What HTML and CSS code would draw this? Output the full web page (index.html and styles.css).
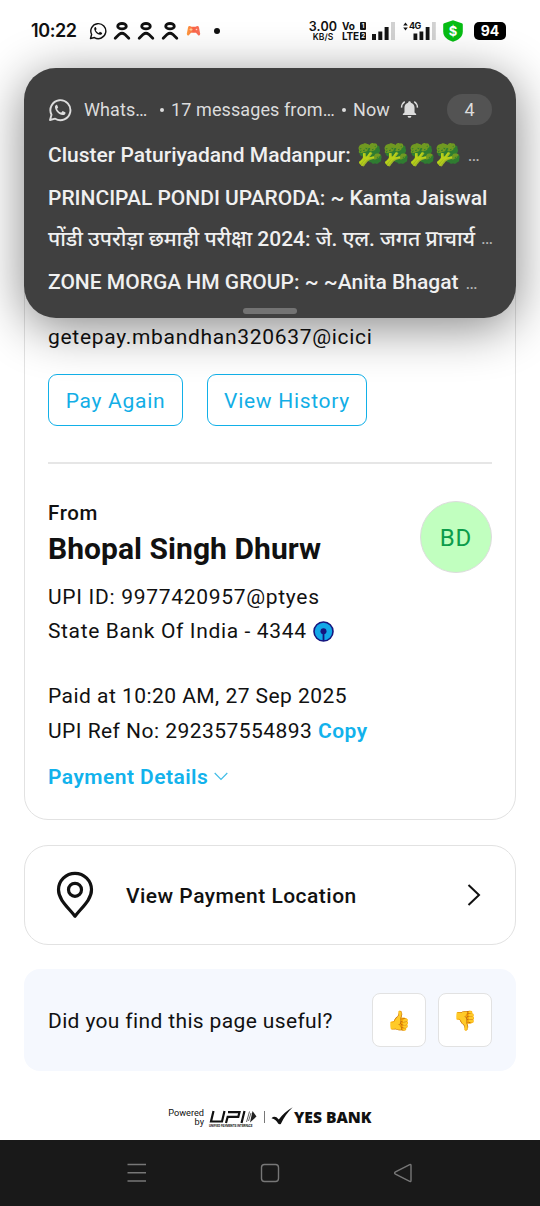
FILE: index.html
```html
<!DOCTYPE html>
<html lang="en">
<head>
    <meta charset="UTF-8">
    <meta name="viewport" content="width=device-width, initial-scale=1.0">
    <title>Payment Receipt</title>
    <link rel="stylesheet" href="styles.css">
</head>
<body>
    <!-- shared icons -->
    <svg width="0" height="0" class="sprite">
        <symbol id="whatsapp" viewBox="0 0 24 24">
            <path d="M2 22l1.5-5.3A10 10 0 1 1 7.2 20.700z" fill="none" stroke="currentColor" stroke-width="1.9" stroke-linejoin="round"/>
            <path d="M8.500 6.800c-1 .4-1.700 1.500-1.500 2.700.7 3.900 3.800 7 7.700 7.600 1.300.1 2.500-.6 2.800-1.900.1-.5 0-.8-.3-1l-2.100-1c-.3-.2-.6-.1-.8.2l-.9 1c-.2.200-.4.200-.7.100-1.500-.6-2.700-1.700-3.500-3.200-.1-.3-.1-.5.100-.7l.7-.9c.1-.2.100-.4 0-.6l-.9-2.100c-.1-.3-.3-.3-.6-.2z" fill="currentColor"/>
        </symbol>
        <symbol id="person" viewBox="0 0 18 20">
            <ellipse cx="9" cy="5.200" rx="4.300" ry="2.700" fill="none" stroke="currentColor" stroke-width="2.800"/>
            <path d="M2.200 17.300L6.200 13.300Q9 11.300 11.800 13.300L15.800 17.300" fill="none" stroke="currentColor" stroke-width="2.800" stroke-linecap="round"/>
        </symbol>
    </svg>

    <div class="screen">
        <header class="status-bar">
            <div class="status-left">
                <span class="clock">10:22</span>
                <svg class="wa-small"><use href="#whatsapp"/></svg>
                <svg class="person"><use href="#person"/></svg>
                <svg class="person"><use href="#person"/></svg>
                <svg class="person"><use href="#person"/></svg>
                <svg class="game" viewBox="0 0 15 12">
                    <defs>
                        <linearGradient id="gameFill"><stop offset="0" stop-color="#ffa13d"/><stop offset=".5" stop-color="#fb6548"/><stop offset="1" stop-color="#f9715b"/></linearGradient>
                    </defs>
                    <path d="M2 2.500Q2.300 1 3.800 1.100l1.700.6h4l1.700-.6Q12.700 1 13 2.500l1.200 6.300q0 2.300-1.800 1.700L10 7.700H5l-2.400 2.800Q.8 11.100.8 8.800z" fill="url(#gameFill)"/>
                    <path d="M3.500 4.600h3M5 3.100v3" stroke="#ffd9a5" stroke-width=".8"/>
                    <circle cx="10.500" cy="4.500" r=".8" fill="#ffd3cb"/>
                </svg>
                <span class="dot"></span>
            </div>
            <div class="status-right">
                <div class="speed"><b>3.00</b><span>KB/S</span></div>
                <div class="volte"><span>Vo <i>1</i></span><span>LTE<i>2</i></span></div>
                <svg class="signal" viewBox="0 0 23 19">
                    <path d="M0 12h4v6H0zM6.300 9.500h4V18h-4zM12.600 5h4v13h-4z" fill="#151515"/>
                    <path d="M19 0h4v18h-4z" fill="#d2d2d2"/>
                </svg>
                <div class="mobile">
                    <svg viewBox="0 0 34 19">
                        <path d="M1.200 3.500L3.500.500l2.300 3zM1.200 5.500l2.300 3 2.300-3z" fill="#151515"/>
                        <path d="M11.500 11.500h3.800V18h-3.800zM17.500 9.500h3.800V18h-3.800zM23.700 5h3.800v13h-3.800z" fill="#151515"/>
                        <path d="M30 0h3.800v18H30z" fill="#d2d2d2"/>
                    </svg>
                    <span>4G</span>
                </div>
                <div class="shield">
                    <svg viewBox="0 0 20 22"><path d="M10 .3l8.800 3q1 .4 1 1.400v7.100c0 5-4.500 8.300-9.800 9.900-5.300-1.600-9.800-4.900-9.800-9.900V4.700q0-1 1-1.400z" fill="#07bd14"/></svg>
                    <span>$</span>
                </div>
                <span class="battery">94</span>
            </div>
        </header>

        <section class="notification">
            <div class="note-head">
                <svg class="wa"><use href="#whatsapp"/></svg>
                <span class="app">Whats…</span>
                <span class="bullet"></span>
                <span class="summary">17 messages from…</span>
                <span class="bullet"></span>
                <span class="now">Now</span>
                <svg class="bell" viewBox="0 0 20 20">
                    <path d="M10 1.300c.9 0 1.400.6 1.400 1.500 2.500.7 3.900 2.700 3.900 5.300v5l1.700 1.700v1H3v-1l1.700-1.700v-5c0-2.600 1.400-4.600 3.900-5.300 0-.9.500-1.500 1.400-1.500zM8 16.800h4a2 2 0 0 1-4 0z" fill="currentColor"/>
                    <path d="M5 1.800Q1.800 4 1.600 8M15 1.800Q18.200 4 18.400 8" fill="none" stroke="currentColor" stroke-width="1.500"/>
                </svg>
                <span class="count">4</span>
            </div>
            <p class="msg msg-one"><span>Cluster Paturiyadand Madanpur: </span><span class="emoji">🥦🥦🥦🥦</span><small>…</small></p>
            <p class="msg msg-two"><span>PRINCIPAL PONDI UPARODA: ~ Kamta Jaiswal</span></p>
            <p class="msg msg-hindi"><span>पोंडी उपरोड़ा छमाही परीक्षा 2024: जे. एल. जगत प्राचार्य</span><small>…</small></p>
            <p class="msg msg-four"><span>ZONE MORGA HM GROUP: ~ ~Anita Bhagat</span><small>…</small></p>
            <span class="handle"></span>
        </section>

        <main class="content">
            <section class="card receipt">
                <p class="line payee">getepay.mbandhan320637@icici</p>
                <div class="actions">
                    <button class="btn pay">Pay Again</button>
                    <button class="btn history">View History</button>
                </div>
                <hr>
                <div class="sender">
                    <div>
                        <p class="from">From</p>
                        <h1>Bhopal Singh Dhurw</h1>
                    </div>
                    <span class="avatar">BD</span>
                </div>
                <p class="line upi">UPI ID: 9977420957@ptyes</p>
                <p class="line bank">State Bank Of India - 4344
                    <svg class="sbi" viewBox="0 0 21 21"><circle cx="10.500" cy="10.500" r="9.500" fill="#12a8e8" stroke="#16167f" stroke-width="1.600"/><circle cx="10.500" cy="10.300" r="3" fill="#16167f"/><path d="M10.500 10v10" stroke="#16167f" stroke-width="1.800"/></svg>
                </p>
                <p class="line paid">Paid at 10:20 AM, 27 Sep 2025</p>
                <p class="line ref">UPI Ref No: 292357554893 <a class="link">Copy</a></p>
                <p class="details"><a class="link">Payment Details</a>
                    <svg viewBox="0 0 14 9"><path d="M.7 1L7 7.500 13.300 1" fill="none" stroke="#40bde7" stroke-width="1.200"/></svg>
                </p>
            </section>

            <section class="card location">
                <svg class="pin" viewBox="0 0 38 48"><path d="M19 45.200C12.500 36.700 2.500 29 2.500 18.800a16.500 16.500 0 0 1 33 0C35.500 29 25.500 36.700 19 45.200z"/><circle cx="19" cy="18.800" r="6.500"/></svg>
                <span>View Payment Location</span>
                <svg class="arrow" viewBox="0 0 14 22"><path d="M1.500 1l10.500 10L1.500 21"/></svg>
            </section>

            <section class="feedback">
                <span>Did you find this page useful?</span>
                <button>👍</button>
                <button>👎</button>
            </section>

            <footer class="powered">
                <span class="by">Powered<br>by</span>
                <div class="upi-logo">
                    <svg viewBox="0 0 48 14"><path d="M4.500 1L2 11.500h11l2.500-10.500M17 13l1.700-6.200h10.600l1.200-4.600H19M35.500 1l-3 12" fill="none" stroke="#111" stroke-width="2.200"/><path d="M40.500 1.500L37.500 12M42 3L39.500 11" stroke="#555" stroke-width=".9"/><path d="M43.500 1l4 5.500-6.500 6z" fill="#222"/></svg>
                    <span>UNIFIED PAYMENTS INTERFACE</span>
                </div>
                <span class="divider"></span>
                <svg class="tick" viewBox="0 0 22 18"><path d="M.5 11.200q2.200-2.300 5-.9l2.300 2.100Q13.500 5 21.700.300 14.200 7.500 9.800 17q-1.500.700-2.700-.4-1.800-4.300-6.600-5.400z" fill="#111"/></svg>
                <b class="yes">YES BANK</b>
            </footer>
        </main>

        <nav class="nav-bar">
            <svg viewBox="0 0 20 20"><path d="M.5 1.500h18.500M.5 9.800h18.500M.5 18h18.500"/></svg>
            <svg viewBox="0 0 20 20"><rect x="1.500" y="1.500" width="17" height="17" rx="3"/></svg>
            <svg viewBox="0 0 20 20"><path d="M16.700 1.600L2.500 8.800q-1.800 1.200 0 2.400l14.200 7.200q1.300.4 1.300-1V2.600q0-1.400-1.300-1z"/></svg>
        </nav>
    </div>
</body>
</html>
```
FILE: styles.css
```css
* {
    box-sizing: border-box;
}

body {
    margin: 0;
    font-family: Roboto, "Noto Sans", "Noto Sans Devanagari", sans-serif;
    background: #fff;
    color: #111;
}

p, h1 {
    margin: 0;
    white-space: nowrap;
}

svg {
    display: block;
    flex: none;
}

button {
    font-family: inherit;
    padding: 0;
    background: #fff;
}

.sprite {
    position: absolute;
}

.screen {
    position: relative;
    width: 540px;
    height: 1206px;
    display: flex;
    flex-direction: column;
    overflow: hidden;
}

/* Status bar */
.status-bar {
    height: 62px;
    padding: 0 34px 0 31px;
    display: flex;
    justify-content: space-between;
    align-items: center;
}

.status-left, .status-right {
    display: flex;
    align-items: center;
}

.clock {
    width: 58px;
    font: 600 18px/20px Inter, sans-serif;
    letter-spacing: -0.4px;
}

.wa-small {
    width: 18px;
    height: 18px;
    margin-right: 6px;
}

.person {
    width: 18px;
    height: 20px;
    margin-right: 6px;
}

.game {
    width: 15px;
    height: 12px;
    margin-left: 1px;
}

.dot {
    width: 6px;
    height: 6px;
    margin-left: 13px;
    border-radius: 50%;
    background: #111;
}

.speed {
    width: 30px;
    text-align: center;
}

.speed b, .speed span {
    display: block;
    font: 600 8.5px/8px Inter, sans-serif;
}

.speed b {
    font-size: 12.5px;
    line-height: 12px;
    letter-spacing: 0.2px;
}

.volte {
    margin-left: 4px;
    width: 24px;
    font: 700 10px/10px Inter, sans-serif;
    letter-spacing: -0.2px;
}

.volte span {
    display: flex;
    justify-content: space-between;
}

.volte i {
    width: 6px;
    height: 8px;
    margin-top: 1px;
    border-radius: 1px;
    background: #151515;
    color: #fff;
    font: 700 6px/8px Inter, sans-serif;
    text-align: center;
}

.signal {
    width: 23px;
    height: 19px;
    margin-left: 6px;
}

.mobile {
    position: relative;
    width: 34px;
    height: 19px;
    margin-left: 7px;
}

.mobile span {
    position: absolute;
    left: 7px;
    top: -1px;
    font: 700 9px/10px Inter, sans-serif;
    letter-spacing: -0.5px;
}

.shield {
    position: relative;
    width: 20px;
    height: 22px;
    margin-left: 7px;
}

.shield span {
    position: absolute;
    inset: 0;
    text-align: center;
    color: #fff;
    font: 700 13px/22px Inter, sans-serif;
}

.battery {
    width: 32px;
    height: 18px;
    margin-left: 11px;
    border-radius: 5px;
    background: #000;
    color: #fff;
    text-align: center;
    font: 700 14px/18px Inter, sans-serif;
}

/* Notification floating over the page */
.notification {
    position: absolute;
    left: 24px;
    top: 68px;
    width: 492px;
    height: 250px;
    padding: 26px 24px 0;
    border-radius: 32px;
    background: #404040;
    color: #f0f0f0;
    box-shadow: 0 9px 50px rgba(0, 0, 0, 0.48);
}

.note-head {
    display: flex;
    align-items: center;
    height: 31px;
    color: #dcdcdc;
    font-size: 18px;
    letter-spacing: 0.1px;
    white-space: nowrap;
}

.wa {
    width: 24px;
    height: 24px;
    margin-right: 12px;
}

.app {
    width: 76px;
}

.bullet {
    width: 4px;
    height: 4px;
    border-radius: 50%;
    background: #dcdcdc;
}

.summary {
    width: 171px;
    margin-left: 7px;
}

.now {
    margin-left: 7px;
}

.bell {
    width: 19px;
    height: 19px;
    margin-left: 10px;
}

.count {
    width: 45px;
    height: 31px;
    margin-left: auto;
    border-radius: 16px;
    background: #535353;
    text-align: center;
    line-height: 31px;
}

.msg {
    display: flex;
    align-items: center;
    height: 43px;
    font-size: 21px;
    font-weight: 500;
}

.msg-one {
    margin-top: 8px;
}

.msg-hindi {
    height: 40px;
    padding-bottom: 3px;
    letter-spacing: -0.03px;
}

.msg-four {
    height: 46px;
}

.msg small {
    margin-left: 7px;
    font-size: 18px;
    font-weight: 400;
    color: #b5b5b5;
}

.msg-hindi small {
    margin-left: 6px;
}

.emoji {
    margin-left: 6px;
    font-size: 21px;
}

.handle {
    position: absolute;
    left: 219px;
    top: 240px;
    width: 54px;
    height: 6px;
    border-radius: 3px;
    background: #737373;
}

/* Receipt */
.content {
    height: 1078px;
    padding: 208px 24px 0;
}

.card {
    border: 1.5px solid #e2e2e2;
    border-radius: 24px;
}

.receipt {
    height: 550px;
    padding: 48px 23px 0;
}

.line {
    height: 34.5px;
    line-height: 36px;
    font-size: 21px;
    letter-spacing: 0.46px;
}

.payee, .upi {
    letter-spacing: 0.7px;
}

.actions {
    display: flex;
    gap: 24px;
    margin-top: 20px;
}

.btn {
    height: 52px;
    padding-top: 2px;
    border: 1.5px solid #12b0e8;
    border-radius: 9px;
    color: #12aee6;
    font-size: 21px;
    letter-spacing: 0.7px;
}

.pay {
    width: 135px;
}

.history {
    width: 160px;
}

hr {
    margin: 36px 0 0;
    border: 0;
    border-top: 2px solid #e6e6e6;
}

.sender {
    display: flex;
    justify-content: space-between;
    margin-top: 37px;
    height: 72px;
}

.from {
    line-height: 24px;
    font-size: 20.5px;
    font-weight: 500;
    letter-spacing: 0.6px;
}

h1 {
    line-height: 48px;
    font-size: 30px;
    font-weight: 700;
    letter-spacing: 0.05px;
}

.avatar {
    width: 72px;
    height: 72px;
    border: 1.5px solid #dcdcdc;
    border-radius: 50%;
    background: #c1ffbf;
    color: #0c9c4b;
    text-align: center;
    font-size: 24px;
    line-height: 72px;
    letter-spacing: 0.8px;
}

.upi {
    margin-top: 6.5px;
}

.bank {
    display: flex;
    align-items: center;
    padding-top: 1px;
    letter-spacing: 0.64px;
}

.sbi {
    width: 21px;
    height: 21px;
    margin-left: 6px;
}

.paid {
    margin-top: 30px;
}

.link {
    color: #12b2ec;
    font-weight: 600;
}

.details {
    display: flex;
    align-items: center;
    height: 30px;
    margin-top: 14.5px;
    font-size: 21px;
    letter-spacing: 0.45px;
}

.details svg {
    width: 14px;
    height: 9px;
    margin-left: 6px;
}

.location {
    display: flex;
    align-items: center;
    height: 100px;
    margin-top: 25px;
    padding: 0 34px 0 31px;
    font-size: 21px;
    font-weight: 500;
    letter-spacing: 0.48px;
}

.location span {
    padding-top: 2px;
}

.pin {
    width: 38px;
    height: 48px;
    margin-right: 32px;
    fill: none;
    stroke: #111;
    stroke-width: 3.2;
    stroke-linejoin: round;
}

.arrow {
    width: 14px;
    height: 22px;
    margin-left: auto;
    fill: none;
    stroke: #111;
    stroke-width: 2;
}

.feedback {
    display: flex;
    align-items: center;
    gap: 12px;
    height: 102px;
    margin-top: 24px;
    padding: 0 24px;
    border-radius: 16px;
    background: #f5f8fe;
    font-size: 21px;
    letter-spacing: 0.36px;
}

.feedback span {
    margin-right: auto;
    padding-top: 2px;
}

.feedback button {
    width: 54px;
    height: 54px;
    border: 1.5px solid #e2e2e2;
    border-radius: 8px;
    font-size: 19px;
}

.powered {
    display: flex;
    align-items: center;
    height: 20px;
    margin: 36px 0 0 143px;
}

.by {
    width: 37px;
    font-size: 9.2px;
    line-height: 9px;
    text-align: right;
}

.upi-logo {
    width: 48px;
    margin-left: 5px;
    padding-top: 3px;
}

.upi-logo svg {
    width: 48px;
    height: 14px;
}

.upi-logo span {
    display: block;
    font-size: 3px;
    font-weight: 700;
    line-height: 4px;
    white-space: nowrap;
}

.divider {
    width: 1px;
    height: 12px;
    margin-left: 7px;
    background: #777;
}

.tick {
    width: 22px;
    height: 18px;
    margin: 0 1px 2px 6px;
}

.yes {
    font: 800 15.6px/20px "Open Sans", sans-serif;
    white-space: nowrap;
}

/* System navigation */
.nav-bar {
    display: flex;
    justify-content: space-between;
    align-items: center;
    height: 66px;
    padding: 0 127px;
    background: #191919;
}

.nav-bar svg {
    width: 20px;
    height: 20px;
    fill: none;
    stroke: #777;
    stroke-width: 1.4;
}
```
